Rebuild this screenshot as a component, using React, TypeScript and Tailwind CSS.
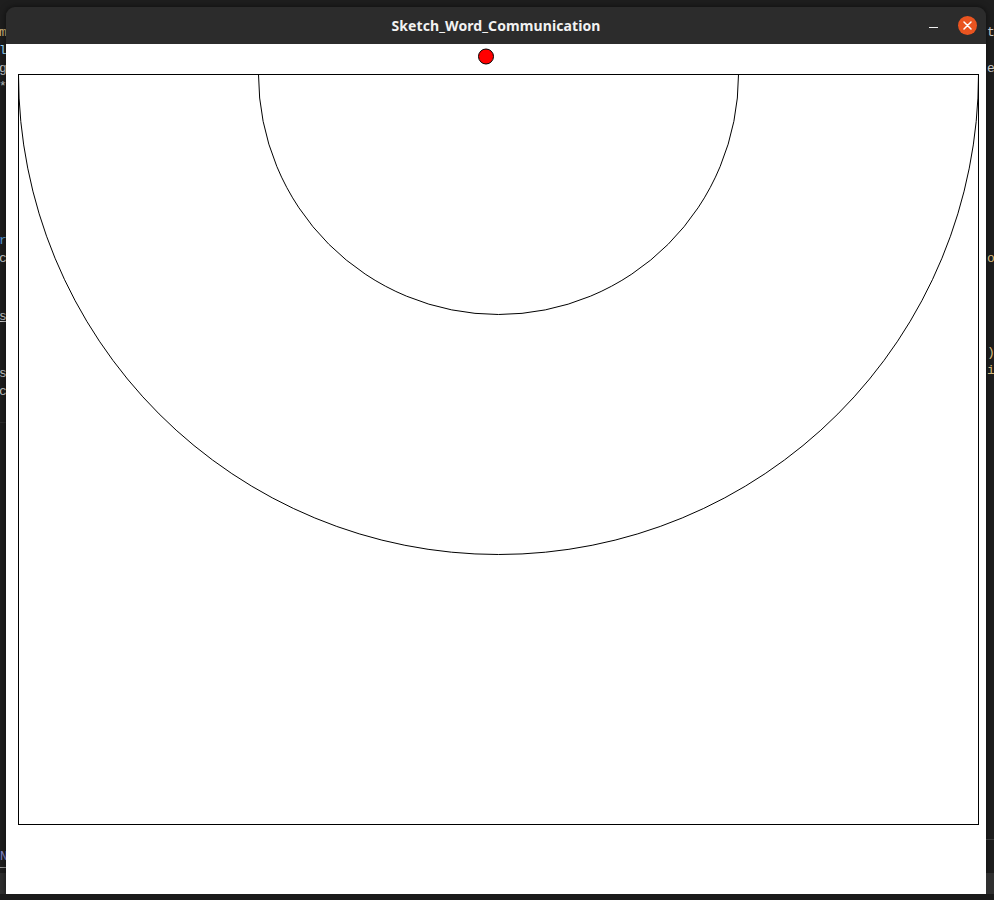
function Sketch() {
  return (
    <svg width="980" height="850" viewBox="0 0 980 850" className="block">
      <rect x="12.5" y="30.5" width="960" height="750" fill="none" stroke="#000" strokeWidth="1" />
      <path d="M 12.5 30.5 A 480 480 0 0 0 972.5 30.5" fill="none" stroke="#000" strokeWidth="1" />
      <path d="M 252.5 30.5 A 240 240 0 0 0 732.5 30.5" fill="none" stroke="#000" strokeWidth="1" />
      <circle cx="480" cy="12.5" r="7.5" fill="#ff0000" stroke="#000" strokeWidth="1" />
    </svg>
  );
}

// slivers of the code editor peeking out on both sides of the window
function LeftEditor() {
  return (
    <div className="w-[6px] shrink-0 flex flex-col pt-[26px] overflow-hidden text-[#c8c8c8]">
      <div className="h-[18px] -ml-px text-[#d7ba7d]">m</div>
      <div className="h-[18px] -ml-px text-[#9cdcfe]">l</div>
      <div className="h-[18px] -ml-px">g</div>
      <div className="h-[18px] -ml-px">*</div>
      <div className="h-[18px] -ml-px mt-[136px] text-[#569cd6]">r</div>
      <div className="h-[18px] -ml-px">c</div>
      <div className="h-[18px] -ml-px mt-[40px] underline">s</div>
      <div className="h-[18px] -ml-px mt-[39px]">s</div>
      <div className="h-[18px] -ml-px">c</div>
      <div className="h-px mt-[19px] bg-[#2e2e2e]" />
      <div className="h-[17px] mt-[427px] text-[#8a8acd]">N</div>
      <div className="h-px bg-[#9a9a9a]" />
      <div className="h-[21px] mt-[5px] bg-[#2f2f2f]" />
    </div>
  );
}

function RightEditor() {
  return (
    <div className="w-[8px] shrink-0 flex flex-col pt-[26px] pl-px overflow-hidden text-[#c8c8c8]">
      <div className="h-[18px]">t</div>
      <div className="h-[18px] mt-[18px]">e</div>
      <div className="h-[18px] mt-[172px] text-[#d7ba7d]">o</div>
      <div className="h-[18px] mt-[76px] text-[#d7ba7d]">)</div>
      <div className="h-[18px] text-[#d7ba7d]">i</div>
      <div className="h-px -ml-px mt-[457px] bg-[#3a3a3a]" />
      <div className="h-[21px] -ml-px mt-[33px] bg-[#2f2f2f]" />
    </div>
  );
}

function TitleBar() {
  return (
    <div className="h-[37px] shrink-0 bg-[#2c2c2c] grid grid-cols-[1fr_auto_1fr] items-center">
      <div />
      <span className="font-['Noto_Sans',sans-serif] font-bold text-[14px] text-[#f2f2f2] tracking-[0.1px]">
        Sketch_Word_Communication
      </span>
      <div className="flex items-center justify-end gap-[20px] pr-[9px]">
        <span className="block w-[9px] h-[1.5px] bg-[#f0f0f0] mt-[4px]" />
        <span className="w-[19px] h-[19px] rounded-full bg-[#e95420] flex items-center justify-center">
          <svg width="9" height="9" viewBox="0 0 9 9">
            <path d="M1 1 L8 8 M8 1 L1 8" stroke="#fff" strokeWidth="1.5" strokeLinecap="round" />
          </svg>
        </span>
      </div>
    </div>
  );
}

export default function App() {
  return (
    <div className="w-[994px] h-[900px] overflow-hidden bg-[#1e1e1e] flex flex-col font-['Liberation_Mono',monospace] text-[13px] leading-none">
      <div className="h-[894px] flex">
        <LeftEditor />
        <div className="w-[980px] h-[887px] mt-[7px] flex flex-col rounded-t-[9px] overflow-hidden shadow-[0_0_6px_rgba(0,0,0,0.6)]">
          <TitleBar />
          <div className="flex-1 bg-white">
            <Sketch />
          </div>
        </div>
        <RightEditor />
      </div>
      <div className="h-[6px] bg-[#1a1a1a]" />
    </div>
  );
}
